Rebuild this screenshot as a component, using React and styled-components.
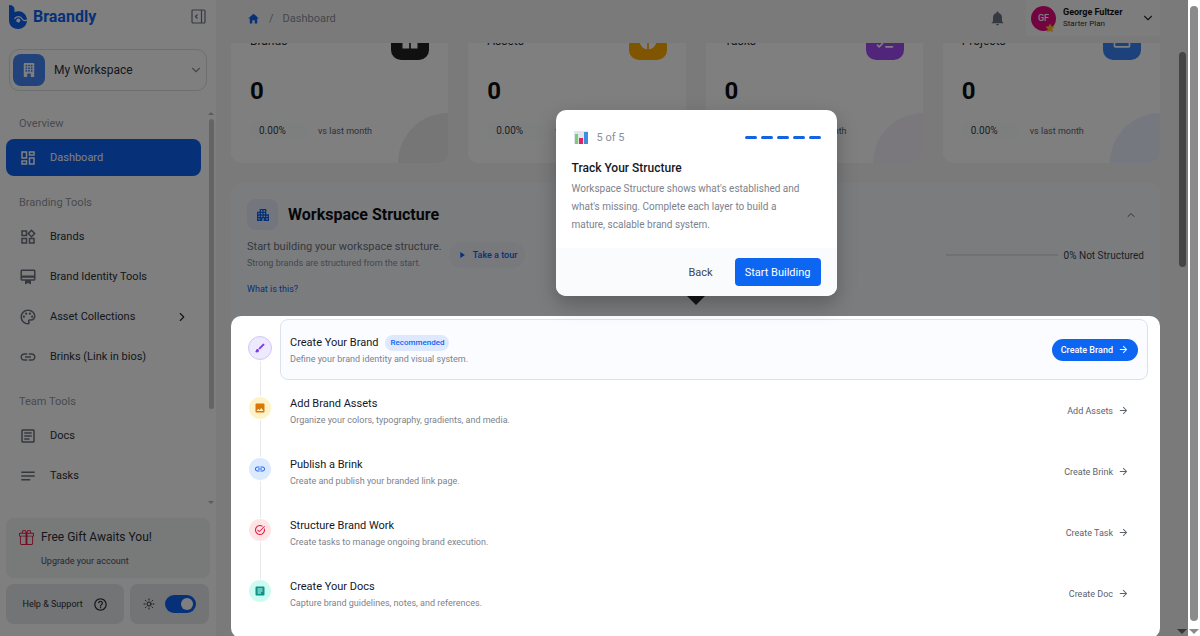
import React from "react";
import styled, { createGlobalStyle } from "styled-components";
import {
  MdApartment,
  MdArrowForward,
  MdArticle,
  MdBrush,
  MdHelpOutline,
  MdImage,
  MdLink,
  MdNotes,
  MdOutlineArticle,
  MdOutlineCardMembership,
  MdOutlineDashboard,
  MdOutlineFolderOpen,
  MdOutlinePalette,
  MdOutlineWidgets,
  MdPlayArrow,
  MdPieChart,
  MdTaskAlt,
  MdWidgets,
} from "react-icons/md";
import { BsFillBuildingFill, BsGift } from "react-icons/bs";
import { IoMdHome, IoMdNotifications } from "react-icons/io";
import { ChevronDown, ChevronRight, ChevronUp, ListChecks, Sun } from "lucide-react";

const GlobalStyle = createGlobalStyle`
  * {
    box-sizing: border-box;
  }

  body {
    margin: 0;
    overflow: hidden;
    font-family: Roboto, "Liberation Sans", sans-serif;
    font-size: 11px;
    color: #2b2f38;
  }

  button,
  select {
    font: inherit;
    color: inherit;
    border: 0;
    background: none;
    padding: 0;
  }

  h2,
  h3,
  p,
  ol,
  ul {
    margin: 0;
    padding: 0;
    list-style: none;
  }

  a {
    color: inherit;
    text-decoration: none;
  }

  svg {
    flex-shrink: 0;
  }
`;

const SWindow = styled.div`
  display: flex;
  height: 100vh;
  background: #ffffff;
`;

const SPage = styled.div`
  position: relative;
  flex: 1;
  min-width: 0;
  display: flex;
  overflow: hidden;
  background: #f5f5f6;
`;

const SDim = styled.div`
  position: absolute;
  inset: 0;
  z-index: 5;
  background: rgba(0, 0, 0, 0.5);
`;

/* scrollbars */

const STrack = styled.div`
  display: flex;
  flex-direction: column;
  align-items: center;
  width: ${(props) => props.$width}px;
  padding: ${(props) => props.$padding};
`;

const SThumb = styled.div`
  width: ${(props) => props.$width}px;
  height: ${(props) => props.$height};
  border-radius: 4px;
  background: ${(props) => props.$color};
`;

const SCaret = styled.span`
  border: ${(props) => props.$size}px solid transparent;
  border-${(props) => (props.$up ? "top" : "bottom")}: 0;
  border-${(props) => (props.$up ? "bottom" : "top")}-color: ${(props) => props.$color};
  margin-top: ${(props) => (props.$end ? "auto" : "0")};
  margin-bottom: ${(props) => (props.$up ? "4px" : "0")};
`;

/* sidebar */

const SSidebar = styled.aside`
  display: flex;
  flex-direction: column;
  width: 216px;
  flex-shrink: 0;
  background: #ffffff;
`;

const SBrandBar = styled.div`
  display: flex;
  align-items: center;
  justify-content: space-between;
  height: 33px;
  padding: 0 10px 0 8px;
`;

const SBrand = styled.a`
  display: flex;
  align-items: center;
  gap: 5px;
  font-size: 16px;
  font-weight: 700;
  color: #0d63f3;
`;

const SIconButton = styled.button`
  display: flex;
  color: ${(props) => props.$color || "#6b7280"};
`;

const SWorkspace = styled.label`
  display: flex;
  align-items: center;
  gap: 9px;
  height: 42px;
  margin: 16px 9px 0;
  padding: 0 3px;
  border: 1px solid #dcdee2;
  border-radius: 10px;
`;

const SWorkspaceIcon = styled.span`
  display: flex;
  align-items: center;
  justify-content: center;
  width: 32px;
  height: 32px;
  border-radius: 8px;
  color: #ffffff;
  background: #4285f4;
`;

const SWorkspaceSelect = styled.select`
  flex: 1;
  min-width: 0;
  appearance: none;
  font-size: 12px;
`;

const SNavArea = styled.div`
  display: flex;
  flex: 1;
  min-height: 0;
  margin-top: 20px;
`;

const SNav = styled.nav`
  flex: 1;
  display: flex;
  flex-direction: column;
  gap: 19px;
  padding: 5px 5px 0 6px;
`;

const SNavTitle = styled.h3`
  margin-bottom: 7px;
  padding-left: 13px;
  font-size: 11px;
  line-height: 16px;
  font-weight: 400;
  color: #9296a0;
`;

const SNavList = styled.ul`
  display: flex;
  flex-direction: column;
  gap: 3px;
`;

const SNavLink = styled.a`
  display: flex;
  align-items: center;
  gap: 13px;
  height: 37px;
  padding: 0 12px 0 13px;
  border-radius: 8px;
  color: ${(props) => (props.$active ? "#ffffff" : "#2b2f38")};
  background: ${(props) => (props.$active ? "#0d63f3" : "none")};

  > svg {
    color: ${(props) => (props.$active ? "#ffffff" : "#6b717d")};
  }

  > svg:last-child:not(:first-child) {
    margin-left: auto;
    color: #2b2f38;
  }
`;

const SGift = styled.a`
  display: grid;
  grid-template-columns: 16px 1fr;
  align-items: center;
  gap: 4px 6px;
  height: 60px;
  margin: 8px 6px 0;
  padding: 8px 13px;
  border-radius: 8px;
  background: #f1f2f3;
`;

const SGiftTitle = styled.span`
  font-size: 12px;
`;

const SGiftText = styled.span`
  grid-column: 2;
  font-size: 9px;
  color: #4b5160;
`;

const SSidebarFoot = styled.div`
  display: flex;
  gap: 6px;
  padding: 6px 7px 12px 6px;
`;

const SFootBox = styled.div`
  display: flex;
  align-items: center;
  justify-content: center;
  gap: 10px;
  flex: ${(props) => props.$grow};
  height: 40px;
  border-radius: 8px;
  font-size: 9px;
  background: #e4e8eb;
`;

const SHelp = styled.button`
  display: flex;
  align-items: center;
  gap: 10px;
`;

const SSwitch = styled.input`
  appearance: none;
  display: flex;
  justify-content: flex-end;
  width: 31px;
  height: 18px;
  margin: 0;
  padding: 3px;
  border-radius: 9px;
  background: #0d63f3;

  &::after {
    content: "";
    width: 12px;
    height: 12px;
    border-radius: 50%;
    background: #ffffff;
  }
`;

/* main column */

const SMain = styled.main`
  flex: 1;
  min-width: 0;
  display: flex;
  flex-direction: column;
`;

const SHeader = styled.header`
  display: flex;
  align-items: center;
  gap: 20px;
  height: 43px;
  padding: 0 0 7px 31px;
`;

const SCrumbs = styled.nav`
  display: flex;
  align-items: center;
  gap: 9px;
  flex: 1;
  color: #8b909b;

  a {
    display: flex;
    color: #0d63f3;
  }
`;

const SUser = styled.button`
  display: flex;
  align-items: center;
  gap: 7px;
  width: 134px;
  height: 36px;
  padding: 0 5px;
  border-radius: 4px;
  text-align: left;
  background: #fbfbfb;
`;

const SUserText = styled.span`
  flex: 1;
  display: flex;
  flex-direction: column;
  font-size: 8px;
  line-height: 12px;

  strong {
    font-size: 9px;
    color: #111111;
  }
`;

const SAvatar = styled.span`
  position: relative;
  display: flex;
  align-items: center;
  justify-content: center;
  width: 25px;
  height: 25px;
  border-radius: 50%;
  font-size: 9px;
  font-weight: 500;
  color: #ffffff;
  background: #e5097f;

  svg {
    position: absolute;
    right: 1px;
    bottom: -2px;
  }
`;

const SScroll = styled.div`
  flex: 1;
  min-height: 0;
  overflow: hidden;
`;

const SContent = styled.div`
  display: flex;
  flex-direction: column;
  gap: 20px;
  margin-top: -40px;
  padding-left: 15px;
`;

const SCards = styled.div`
  display: grid;
  grid-template-columns: repeat(4, 1fr);
  gap: 20px;
`;

const SCard = styled.section`
  position: relative;
  display: flex;
  flex-direction: column;
  gap: 16px;
  height: 160px;
  padding: 19px;
  border-radius: 10px;
  overflow: hidden;
  background: #ffffff;

  &::after {
    content: "";
    position: absolute;
    right: -50px;
    bottom: -50px;
    width: 100px;
    height: 100px;
    border-radius: 50%;
    background: ${(props) => props.$tint};
  }
`;

const SCardHead = styled.div`
  display: flex;
  align-items: center;
  justify-content: space-between;
  height: 38px;
  font-size: 12px;
`;

const SCardIcon = styled.span`
  display: flex;
  align-items: center;
  justify-content: center;
  width: 38px;
  height: 38px;
  border-radius: 10px;
  color: #ffffff;
  background: ${(props) => props.$color};
`;

const SCardValue = styled.strong`
  font-size: 24px;
  line-height: 30px;
  color: #0c0e12;
`;

const SCardFoot = styled.div`
  display: flex;
  align-items: center;
  gap: 10px;
  font-size: 9px;
  color: #5c626e;
`;

const SChange = styled.span`
  width: 58px;
  padding: 0 9px;
  border-radius: 11px;
  font-size: 10px;
  line-height: 18px;
  color: #3a3f4a;
  background: #fbfcfd;
`;

/* workspace structure */

const SPanel = styled.section`
  border-radius: 10px;
  background: linear-gradient(#f7f9fd, #f9fafd);
`;

const SPanelHead = styled.div`
  display: flex;
  flex-direction: column;
  height: 133px;
  padding: 16px 16px 0;
`;

const SPanelTitle = styled.div`
  display: flex;
  align-items: center;
  gap: 10px;
  padding-right: 7px;

  h2 {
    flex: 1;
    font-size: 16px;
    color: #0c0e12;
  }
`;

const SPanelIcon = styled.span`
  display: flex;
  align-items: center;
  justify-content: center;
  width: 31px;
  height: 31px;
  border-radius: 8px;
  color: #0d63f3;
  background: #e6ecf8;
`;

const SPanelIntro = styled.div`
  display: flex;
  align-items: center;
  gap: 7px;
  margin-top: 9px;
`;

const SPanelText = styled.p`
  line-height: 16px;
  color: #6b7280;

  small {
    display: block;
    font-size: 9px;
    color: #8b909b;
  }
`;

const STour = styled.button`
  display: flex;
  align-items: center;
  gap: 6px;
  height: 26px;
  padding: 0 8px;
  border-radius: 13px;
  font-size: 9px;
  font-weight: 500;
  color: #0d63f3;
  background: #eef2fa;
`;

const SStatus = styled.label`
  display: flex;
  align-items: center;
  gap: 6px;
  margin-left: auto;
  font-size: 10px;
  color: #3a3f4a;
`;

const SProgress = styled.progress`
  appearance: none;
  width: 112px;
  height: 2px;
  border: 0;
  background: #dfe2e8;

  &::-webkit-progress-bar {
    background: #dfe2e8;
  }
`;

const SWhat = styled.a`
  margin-top: 11px;
  font-size: 9px;
  line-height: 14px;

  && {
    color: #0d63f3;
  }
`;

const SSpotlight = styled.div`
  position: relative;
  z-index: 10;
  padding: 3px 12px 14px 17px;
  border-radius: 10px;
  background: #ffffff;
`;

const SStep = styled.li`
  display: flex;
  gap: 8px;
`;

const SStepRail = styled.div`
  display: flex;
  flex-direction: column;
  align-items: center;
  gap: 1px;
  width: 24px;
  height: 61px;

  &::before,
  &::after {
    content: "";
    width: 1px;
    height: 16px;
    background: ${(props) => (props.$first ? "none" : "#e8e9ec")};
  }

  &::after {
    height: auto;
    flex: 1;
    background: ${(props) => (props.$last ? "none" : "#e8e9ec")};
  }
`;

const SStepIcon = styled.span`
  display: flex;
  align-items: center;
  justify-content: center;
  width: ${(props) => (props.$ring ? 24 : 22)}px;
  height: ${(props) => (props.$ring ? 24 : 22)}px;
  border: ${(props) => (props.$ring ? "1px solid #d3c6f7" : "0")};
  border-radius: 50%;
  color: ${(props) => props.$color};
  background: ${(props) => props.$tint};
`;

const SStepBody = styled.div`
  flex: 1;
  display: flex;
  align-items: center;
  justify-content: space-between;
  padding: 0 9px;
  border: 1px solid ${(props) => (props.$current ? "#dbe2ee" : "transparent")};
  border-radius: 8px;
  background: ${(props) => (props.$current ? "#fafcff" : "none")};
`;

const SStepLabel = styled.div`
  padding-top: 2px;
`;

const SStepTitle = styled.h3`
  display: flex;
  align-items: center;
  gap: 7px;
  font-size: 11px;
  line-height: 16px;
  font-weight: 400;
  color: #14181f;
`;

const SStepText = styled.p`
  font-size: 9px;
  line-height: 16px;
  color: #7c828d;
`;

const SBadge = styled.span`
  padding: 0 5px;
  border-radius: 8px;
  font-size: 8px;
  font-weight: 500;
  color: #0d63f3;
  background: #dfe9fd;
`;

const SStepButton = styled.button`
  display: flex;
  align-items: center;
  gap: 5px;
  height: 22px;
  padding: 0 9px;
  border-radius: 11px;
  font-size: 9px;
  color: ${(props) => (props.$primary ? "#ffffff" : "#5c626e")};
  background: ${(props) => (props.$primary ? "#0d66f2" : "none")};
  font-weight: ${(props) => (props.$primary ? 500 : 400)};
`;

/* tour popover, hangs above the highlighted steps */

const SPopover = styled.div`
  position: absolute;
  bottom: calc(100% + 20px);
  left: 50%;
  width: 281px;
  margin-left: -140px;
  border-radius: 10px;
  background: #ffffff;
  box-shadow: 0 8px 20px rgba(0, 0, 0, 0.25);

  &::after {
    content: "";
    position: absolute;
    top: 100%;
    left: 50%;
    margin-left: -9px;
    border: 9px solid transparent;
    border-bottom: 0;
    border-top-color: #0f1215;
  }
`;

const SPopoverBody = styled.div`
  padding: 18px 16px 14px;

  h3 {
    margin: 13px 0 3px;
    font-size: 12px;
    line-height: 18px;
    font-weight: 500;
    color: #14181f;
  }

  p {
    padding-right: 12px;
    font-size: 10px;
    line-height: 18px;
    color: #7c828d;
  }
`;

const SPopoverCount = styled.div`
  display: flex;
  align-items: center;
  gap: 8px;
  height: 18px;
  color: #8b909b;
`;

const SDashes = styled.span`
  display: flex;
  gap: 4px;
  margin-left: auto;

  i {
    width: 12px;
    height: 3px;
    border-radius: 2px;
    background: #1463e6;
  }
`;

const SPopoverFoot = styled.div`
  display: flex;
  align-items: center;
  justify-content: flex-end;
  gap: 22px;
  height: 48px;
  padding: 0 16px;
  border-radius: 0 0 10px 10px;
  background: #f9fbfd;
  color: #3f4550;
`;

const SStart = styled.button`
  height: 28px;
  padding: 0 10px;
  border-radius: 4px;
  color: #ffffff;
  background: #0d66f2;
`;

const Logo = () => (
  <svg width="20" height="24" viewBox="0 0 20 24">
    <path
      d="M1 0c3.500 0 5.500 1.500 5.500 4.500V7c5-2 11.500 0 12.500 7.500.5 5-3.500 9.500-9 9.500S1 20.500 1 15z"
      fill="#0d63f3"
    />
    <path
      d="M6.500 14a4.300 4.300 0 0 1 7.700 0c1 1.500 3 1.900 5.300 1.200"
      fill="none"
      stroke="#ffffff"
      strokeWidth="1.300"
    />
    <circle cx="10.300" cy="15.500" r="2" fill="#ffffff" />
  </svg>
);

const CollapseIcon = () => (
  <svg width="15" height="15" viewBox="0 0 15 15" fill="none" stroke="currentColor" strokeWidth="1.200">
    <rect x="1" y="1" width="13" height="13" rx="1" />
    <path d="M10.500 1v13M6.500 5.500l-2 2 2 2" />
  </svg>
);

const ChartIcon = () => (
  <svg width="17" height="17" viewBox="0 0 17 17">
    <rect x="2" y="2" width="14" height="13" rx="1" fill="#dfe6ee" />
    <rect x="3" y="5" width="3" height="10" fill="#7fc97a" />
    <rect x="7" y="9" width="4" height="6" fill="#e0245e" />
    <rect x="12" y="3" width="4" height="12" fill="#3b8fdc" />
  </svg>
);

const StarIcon = () => (
  <svg width="10" height="10" viewBox="0 0 24 24" fill="#ffc01e">
    <path d="M12 1l3.400 7 7.600 1-5.600 5.300 1.500 7.700L12 18.300 5.100 22l1.500-7.700L1 9l7.600-1z" />
  </svg>
);

const sections = [
  {
    title: "Overview",
    items: [{ label: "Dashboard", icon: MdOutlineDashboard, active: true }],
  },
  {
    title: "Branding Tools",
    items: [
      { label: "Brands", icon: MdOutlineWidgets },
      { label: "Brand Identity Tools", icon: MdOutlineCardMembership },
      { label: "Asset Collections", icon: MdOutlinePalette, more: true },
      { label: "Brinks (Link in bios)", icon: MdLink },
    ],
  },
  {
    title: "Team Tools",
    items: [
      { label: "Docs", icon: MdOutlineArticle },
      { label: "Tasks", icon: MdNotes },
    ],
  },
];

const cards = [
  { label: "Brands", icon: MdWidgets, color: "#202020", tint: "#ececec" },
  { label: "Assets", icon: MdPieChart, color: "#ffab00", tint: "#fdf6e6" },
  { label: "Tasks", icon: ListChecks, color: "#a34df5", tint: "#f5f0fa" },
  { label: "Projects", icon: MdOutlineFolderOpen, color: "#3b82f6", tint: "#eaf1fc" },
];

const steps = [
  {
    title: "Create Your Brand",
    text: "Define your brand identity and visual system.",
    action: "Create Brand",
    icon: MdBrush,
    color: "#7c3aed",
    tint: "#ede9fe",
  },
  {
    title: "Add Brand Assets",
    text: "Organize your colors, typography, gradients, and media.",
    action: "Add Assets",
    icon: MdImage,
    color: "#d97706",
    tint: "#fef3c7",
  },
  {
    title: "Publish a Brink",
    text: "Create and publish your branded link page.",
    action: "Create Brink",
    icon: MdLink,
    color: "#2563eb",
    tint: "#dbeafe",
  },
  {
    title: "Structure Brand Work",
    text: "Create tasks to manage ongoing brand execution.",
    action: "Create Task",
    icon: MdTaskAlt,
    color: "#e11d48",
    tint: "#ffe4e6",
  },
  {
    title: "Create Your Docs",
    text: "Capture brand guidelines, notes, and references.",
    action: "Create Doc",
    icon: MdArticle,
    color: "#0d9488",
    tint: "#ccfbf1",
  },
];

const Sidebar = () => {
  return (
    <SSidebar>
      <SBrandBar>
        <SBrand href="#home">
          <Logo />
          Braandly
        </SBrand>
        <SIconButton aria-label="Collapse sidebar">
          <CollapseIcon />
        </SIconButton>
      </SBrandBar>
      <SWorkspace>
        <SWorkspaceIcon>
          <BsFillBuildingFill size={14} />
        </SWorkspaceIcon>
        <SWorkspaceSelect aria-label="Workspace">
          <option>My Workspace</option>
        </SWorkspaceSelect>
        <ChevronDown size={14} color="#8b909b" />
      </SWorkspace>
      <SNavArea>
        <SNav>
          {sections.map((section) => (
            <div key={section.title}>
              <SNavTitle>{section.title}</SNavTitle>
              <SNavList>
                {section.items.map(({ label, icon: Icon, active, more }) => (
                  <li key={label}>
                    <SNavLink href="#nav" $active={active}>
                      <Icon size={18} />
                      {label}
                      {more && <ChevronRight size={14} />}
                    </SNavLink>
                  </li>
                ))}
              </SNavList>
            </div>
          ))}
        </SNav>
        <STrack $width={10} $padding="1px 1px 6px">
          <SCaret $up $size={3} $color="#b8b8b8" />
          <SThumb $width={5} $height="74%" $color="#c9c9c9" />
          <SCaret $end $size={3} $color="#b8b8b8" />
        </STrack>
      </SNavArea>
      <SGift href="#upgrade">
        <BsGift size={15} color="#e11d48" />
        <SGiftTitle>Free Gift Awaits You!</SGiftTitle>
        <SGiftText>Upgrade your account</SGiftText>
      </SGift>
      <SSidebarFoot>
        <SFootBox $grow={3}>
          <SHelp>
            Help &amp; Support
            <MdHelpOutline size={15} />
          </SHelp>
        </SFootBox>
        <SFootBox $grow={2}>
          <Sun size={12} />
          <SSwitch type="checkbox" defaultChecked aria-label="Light mode" />
        </SFootBox>
      </SSidebarFoot>
    </SSidebar>
  );
};

const Header = () => {
  return (
    <SHeader>
      <SCrumbs>
        <a href="#home" aria-label="Home">
          <IoMdHome size={13} />
        </a>
        <span>/</span>
        <span>Dashboard</span>
      </SCrumbs>
      <SIconButton aria-label="Notifications">
        <IoMdNotifications size={17} />
      </SIconButton>
      <SUser>
        <SAvatar>
          GF
          <StarIcon />
        </SAvatar>
        <SUserText>
          <strong>George Fultzer</strong>
          Starter Plan
        </SUserText>
        <ChevronDown size={14} />
      </SUser>
    </SHeader>
  );
};

const StatCard = (props) => {
  const { label, icon: Icon, color, tint } = props;
  return (
    <SCard $tint={tint}>
      <SCardHead>
        {label}
        <SCardIcon $color={color}>
          <Icon size={20} />
        </SCardIcon>
      </SCardHead>
      <SCardValue>0</SCardValue>
      <SCardFoot>
        <SChange>0.00%</SChange>
        vs last month
      </SCardFoot>
    </SCard>
  );
};

const Popover = () => {
  return (
    <SPopover role="dialog" aria-label="Track Your Structure">
      <SPopoverBody>
        <SPopoverCount>
          <ChartIcon />
          5 of 5
          <SDashes>
            {steps.map((step) => (
              <i key={step.title} />
            ))}
          </SDashes>
        </SPopoverCount>
        <h3>Track Your Structure</h3>
        <p>
          Workspace Structure shows what's established and what's missing.
          Complete each layer to build a mature, scalable brand system.
        </p>
      </SPopoverBody>
      <SPopoverFoot>
        <button>Back</button>
        <SStart>Start Building</SStart>
      </SPopoverFoot>
    </SPopover>
  );
};

const Structure = () => {
  return (
    <SPanel>
      <SPanelHead>
        <SPanelTitle>
          <SPanelIcon>
            <MdApartment size={16} />
          </SPanelIcon>
          <h2>Workspace Structure</h2>
          <SIconButton $color="#5c626e" aria-label="Collapse section">
            <ChevronUp size={12} />
          </SIconButton>
        </SPanelTitle>
        <SPanelIntro>
          <SPanelText>
            Start building your workspace structure.
            <small>Strong brands are structured from the start.</small>
          </SPanelText>
          <STour>
            <MdPlayArrow size={10} />
            Take a tour
          </STour>
          <SStatus>
            <SProgress value={0} max={100} />
            0% Not Structured
          </SStatus>
        </SPanelIntro>
        <SWhat href="#about">What is this?</SWhat>
      </SPanelHead>
      <SSpotlight>
        <Popover />
        <ol>
          {steps.map(({ title, text, action, icon: Icon, color, tint }, i) => (
            <SStep key={title}>
              <SStepRail $first={i === 0} $last={i === steps.length - 1}>
                <SStepIcon $color={color} $tint={tint} $ring={i === 0}>
                  <Icon size={12} />
                </SStepIcon>
              </SStepRail>
              <SStepBody $current={i === 0}>
                <SStepLabel>
                  <SStepTitle>
                    {title}
                    {i === 0 && <SBadge>Recommended</SBadge>}
                  </SStepTitle>
                  <SStepText>{text}</SStepText>
                </SStepLabel>
                <SStepButton $primary={i === 0}>
                  {action}
                  <MdArrowForward size={11} />
                </SStepButton>
              </SStepBody>
            </SStep>
          ))}
        </ol>
      </SSpotlight>
    </SPanel>
  );
};

export default function App() {
  return (
    <SWindow>
      <GlobalStyle />
      <SPage>
        <Sidebar />
        <SMain>
          <Header />
          <SScroll>
            <SContent>
              <SCards>
                {cards.map((card) => (
                  <StatCard key={card.label} {...card} />
                ))}
              </SCards>
              <Structure />
            </SContent>
          </SScroll>
        </SMain>
        <STrack $width={28} $padding="52px 0 2px 16px">
          <SThumb $width={7} $height="37%" $color="#8a8a8a" />
          <SCaret $end $size={5} $color="#6a6a6a" />
        </STrack>
        <SDim />
      </SPage>
      <STrack $width={12} $padding="6px 0 2px">
        <SThumb $width={8} $height="98%" $color="#8b8b8b" />
        <SCaret $end $size={5} $color="#8b8b8b" />
      </STrack>
    </SWindow>
  );
}
